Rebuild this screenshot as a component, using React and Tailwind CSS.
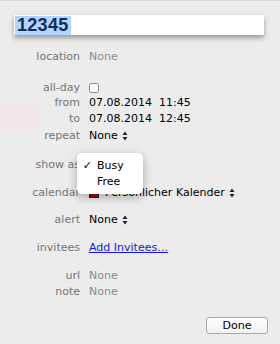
import React from 'react'

const font = { fontFamily: '"DejaVu Sans", "Liberation Sans", sans-serif' }

const UpDown = () => (
  <svg width="6" height="10" viewBox="0 0 6 10" className="ml-[4px]">
    <path d="M3 0.5 L5.5 4 L0.5 4 Z" fill="#222" />
    <path d="M3 9.5 L5.5 6 L0.5 6 Z" fill="#222" />
  </svg>
)

const Row = ({ label, mt, children }) => (
  <div className={`flex items-center h-4 ${mt}`}>
    <div className="w-[80px] text-right text-[11px] text-[#747474]">{label}</div>
    <div className="ml-[9px] flex items-center text-[11px] text-black">{children}</div>
  </div>
)

export default function App() {
  return (
    <div className="relative w-[280px] h-[344px] bg-[#ececec] border-t border-[#d8d8d8] overflow-hidden" style={font}>
      {/* faint pink patch behind the panel */}
      <div className="absolute left-0 top-[98px] w-[40px] h-[32px] bg-[#f1e9e9]" />

      {/* title field */}
      <div className="relative ml-[14px] mt-[14px] w-[250px] h-[20px] bg-white shadow-[0_3px_5px_rgba(0,0,0,0.35)] flex items-center">
        <span
          className="ml-[1px] px-[2px] bg-[#b4d5fe] text-[18px] leading-[19px] font-bold text-[#0f2e5c] tracking-[0.3px]"
          style={{ fontFamily: '"Liberation Sans", Arial, sans-serif' }}
        >
          12345
        </span>
      </div>

      <div className="relative">
        <Row label="location" mt="mt-[14px]"><span className="text-[#8c8c8c]">None</span></Row>
        <Row label="all-day" mt="mt-[15px]">
          <div className="w-[10px] h-[10px] rounded-[2px] border border-[#8c8c8c] bg-white" />
        </Row>
        <Row label="from" mt="mt-[-1px]"><span>07.08.2014&nbsp;&nbsp;11:45</span></Row>
        <Row label="to" mt="mt-0"><span>07.08.2014&nbsp;&nbsp;12:45</span></Row>
        <Row label="repeat" mt="mt-[1px]"><span>None</span><UpDown /></Row>
        <Row label="show as" mt="mt-[13px]"><span className="invisible">Busy</span></Row>
        <Row label="calendar" mt="mt-[12px]">
          <div className="w-[10px] h-[10px] bg-[#8e1414] border border-[#3a0a0a]" />
          <span className="ml-[6px]">Persönlicher Kalender</span>
          <UpDown />
        </Row>
        <Row label="alert" mt="mt-[11px]"><span>None</span><UpDown /></Row>
        <Row label="invitees" mt="mt-[12px]">
          <span className="text-[#1515e0] underline">Add Invitees…</span>
        </Row>
        <Row label="url" mt="mt-[12px]"><span className="text-[#8c8c8c]">None</span></Row>
        <Row label="note" mt="mt-0"><span className="text-[#8c8c8c]">None</span></Row>
      </div>

      <div className="flex justify-end pr-[12px] mt-[17px]">
        <button className="w-[62px] h-[17px] rounded-[3px] border border-[#a9a9a9] bg-gradient-to-b from-white to-[#f1f1f1] text-[11px] leading-[15px] text-black">
          Done
        </button>
      </div>

      {/* show-as popup menu */}
      <div className="absolute left-[77px] top-[152px] w-[66px] h-[41px] bg-white rounded-[5px] shadow-[0_3px_10px_rgba(0,0,0,0.3)] text-[11px] text-black">
        <div className="flex items-center h-[16px] mt-[5px]">
          <span className="w-[20px] text-right pr-[5px]">✓</span>
          <span>Busy</span>
        </div>
        <div className="flex items-center h-[16px]">
          <span className="w-[20px]" />
          <span>Free</span>
        </div>
      </div>
    </div>
  )
}
